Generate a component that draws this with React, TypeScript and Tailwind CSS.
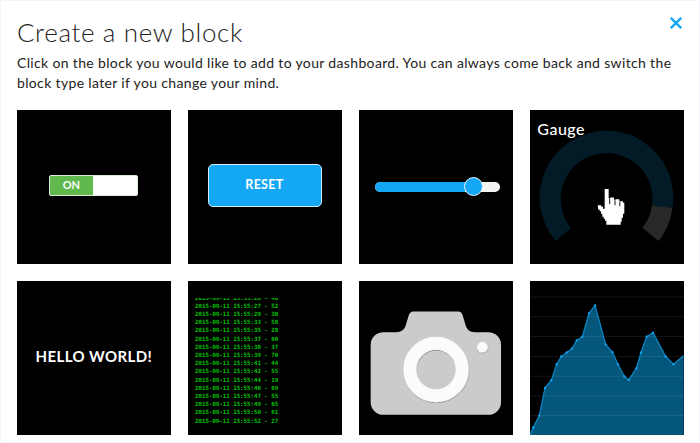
import type { ReactNode } from "react";

const LOG_LINES = [
  "2015-09-11 15:55:26 - 40",
  "2015-09-11 15:55:27 - 52",
  "2015-09-11 15:55:29 - 30",
  "2015-09-11 15:55:33 - 58",
  "2015-09-11 15:55:35 - 28",
  "2015-09-11 15:55:37 - 60",
  "2015-09-11 15:55:38 - 37",
  "2015-09-11 15:55:39 - 70",
  "2015-09-11 15:55:41 - 44",
  "2015-09-11 15:55:42 - 55",
  "2015-09-11 15:55:44 - 19",
  "2015-09-11 15:55:46 - 69",
  "2015-09-11 15:55:47 - 55",
  "2015-09-11 15:55:49 - 65",
  "2015-09-11 15:55:50 - 61",
  "2015-09-11 15:55:52 - 27",
];

const CHART_POINTS: [number, number][] = [
  [0, 461], [10, 438], [28, 403], [45, 320], [64, 297], [80, 249], [94, 226],
  [110, 214], [126, 202], [140, 178], [157, 167], [177, 97], [195, 73],
  [227, 190], [247, 213], [264, 250], [283, 286], [296, 296], [319, 261],
  [333, 214], [350, 167], [369, 155], [407, 226], [430, 249], [461, 224],
];

const GRID_LINES = [48, 107, 166, 226, 285, 344, 403];

function Tile({ children }: { children: ReactNode }) {
  return (
    <div className="relative flex items-center justify-center overflow-hidden bg-black">
      {children}
    </div>
  );
}

function SwitchTile() {
  return (
    <Tile>
      <div className="mb-[3px] mr-px flex h-[21px] w-[89px] overflow-hidden rounded-[2px] border border-[#d9ecd5] bg-white">
        <div className="flex w-[43px] items-center justify-center bg-[#5fb94c] text-[11px] font-bold text-white">
          ON
        </div>
      </div>
    </Tile>
  );
}

function ButtonTile() {
  return (
    <Tile>
      <div className="mb-[3px] flex h-[43px] w-[114px] items-center justify-center rounded-[5px] border border-[#d5edfb] bg-[#14a8f4] pr-px text-[12.500px] font-bold tracking-[0.300px] text-white">
        RESET
      </div>
    </Tile>
  );
}

function SliderTile() {
  return (
    <Tile>
      <div className="ml-[2px] flex h-[10px] w-[125px] items-center rounded-full bg-[#f4f4f4]">
        <div className="h-[10px] w-[90px] rounded-l-full bg-[#14a8f4]" />
        <div className="-ml-px size-[19px] shrink-0 rounded-full border border-[#e8f6fe] bg-[#14a8f4]" />
      </div>
    </Tile>
  );
}

function GaugeTile() {
  return (
    <Tile>
      <svg className="size-full" viewBox="0 0 153.7 153.7">
        <path
          d="M25.7 131.2A66.9 66.9 0 1 1 142.6 97.8L122.1 95.9A46 46 0 1 0 41 118.2Z"
          fill="#021b26"
        />
        <path
          d="M142.6 97.8A66.9 66.9 0 0 1 128.7 131.2L112.3 118A46 46 0 0 0 122.1 95.9Z"
          fill="#282828"
        />
        <g transform="scale(0.3333) translate(165 209)">
          <path
            d="M59 28H71V56H76V54H87V61H92V59H103V66H106V65H114V70H118V103H114V115H110V127H107V136H64V124H60V118H56V112H52V103H48V95H44V90H39V81H38V77H49V82H54V88H59Z"
            fill="#fff"
          />
          <path d="M74 57V74M90 62V77M104.500 67V80" stroke="#111" strokeWidth="3" />
        </g>
      </svg>
      <span className="absolute left-[7px] top-[9px] text-[16px] font-medium leading-5 tracking-[0.500px] text-white">
        Gauge
      </span>
    </Tile>
  );
}

function TextTile() {
  return (
    <Tile>
      <span className="mb-[4px] whitespace-nowrap text-[15px] font-bold tracking-[0.400px] text-white">
        HELLO WORLD!
      </span>
    </Tile>
  );
}

function LogTile() {
  return (
    <Tile>
      <div className="mt-[17px] h-full w-full self-start overflow-hidden pl-[7px]">
        <pre className="-mt-[4.500px] font-['DejaVu_Sans_Mono',monospace] text-[5.760px] font-bold leading-[8.190px] text-[#00c800]">
          {LOG_LINES.join("\n")}
        </pre>
      </div>
    </Tile>
  );
}

function CameraTile() {
  return (
    <Tile>
      <svg className="size-full" viewBox="0 0 461 461">
        <defs>
          <filter id="lens-shadow" x="-20%" y="-20%" width="140%" height="140%">
            <feDropShadow dx="1" dy="3" stdDeviation="2" floodOpacity="0.25" />
          </filter>
        </defs>
        <path
          d="M73 153H111C126 153 135 147 140 133L149 103Q153 91 163 91H298Q308 91 311 103L320 133C325 147 333 153 347 153H388A38 38 0 0 1 426 191V363A38 38 0 0 1 388 401H73A38 38 0 0 1 35 363V191A38 38 0 0 1 73 153Z"
          fill="#cbcbcb"
        />
        <g filter="url(#lens-shadow)">
          <circle cx="231" cy="265" r="78.500" fill="none" stroke="#fbfbfb" strokeWidth="39" />
          <circle cx="370" cy="198" r="16" fill="#fbfbfb" />
        </g>
      </svg>
    </Tile>
  );
}

function ChartTile() {
  const line = CHART_POINTS.map((p) => p.join(",")).join(" ");
  return (
    <Tile>
      <svg className="size-full" viewBox="0 0 461 461" preserveAspectRatio="none">
        <polygon points={`${line} 461,461`} fill="#05567b" />
        {GRID_LINES.map((y) => (
          <line key={y} x1="0" x2="461" y1={y} y2={y} stroke="#fff" strokeOpacity="0.08" strokeWidth="3" />
        ))}
        <polyline points={line} fill="none" stroke="#0b83bf" strokeWidth="4" />
        {CHART_POINTS.slice(1, -1).map(([x, y]) => (
          <circle key={x} cx={x} cy={y} r="3.500" fill="#14a0ea" />
        ))}
      </svg>
    </Tile>
  );
}

export default function App() {
  return (
    <main className="relative h-[443px] w-[700px] overflow-hidden border border-[#f3f5fb] bg-white pl-4 pt-4 font-[Lato,sans-serif] text-[#222]">
      <h1 className="h-9 whitespace-nowrap text-[26px] font-light leading-[30px] tracking-[0.640px]">
        Create a new block
      </h1>
      <p className="h-[57px] whitespace-nowrap text-[14px] leading-5 tracking-[0.345px]">
        Click on the block you would like to add to your dashboard. You can always come back and switch the
        <br />
        block type later if you change your mind.
      </p>
      <button className="absolute right-[17px] top-[16px]" aria-label="Close">
        <svg className="size-3" viewBox="0 0 12 12" fill="none" stroke="#14a8f4" strokeWidth="2.400">
          <path d="M0.800 0.800L11.200 11.200M11.200 0.800L0.800 11.200" />
        </svg>
      </button>
      <section className="grid w-[667px] grid-cols-4 grid-rows-[153.500px_154px] gap-x-[17.400px] gap-y-[17.700px]">
        <SwitchTile />
        <ButtonTile />
        <SliderTile />
        <GaugeTile />
        <TextTile />
        <LogTile />
        <CameraTile />
        <ChartTile />
      </section>
    </main>
  );
}
